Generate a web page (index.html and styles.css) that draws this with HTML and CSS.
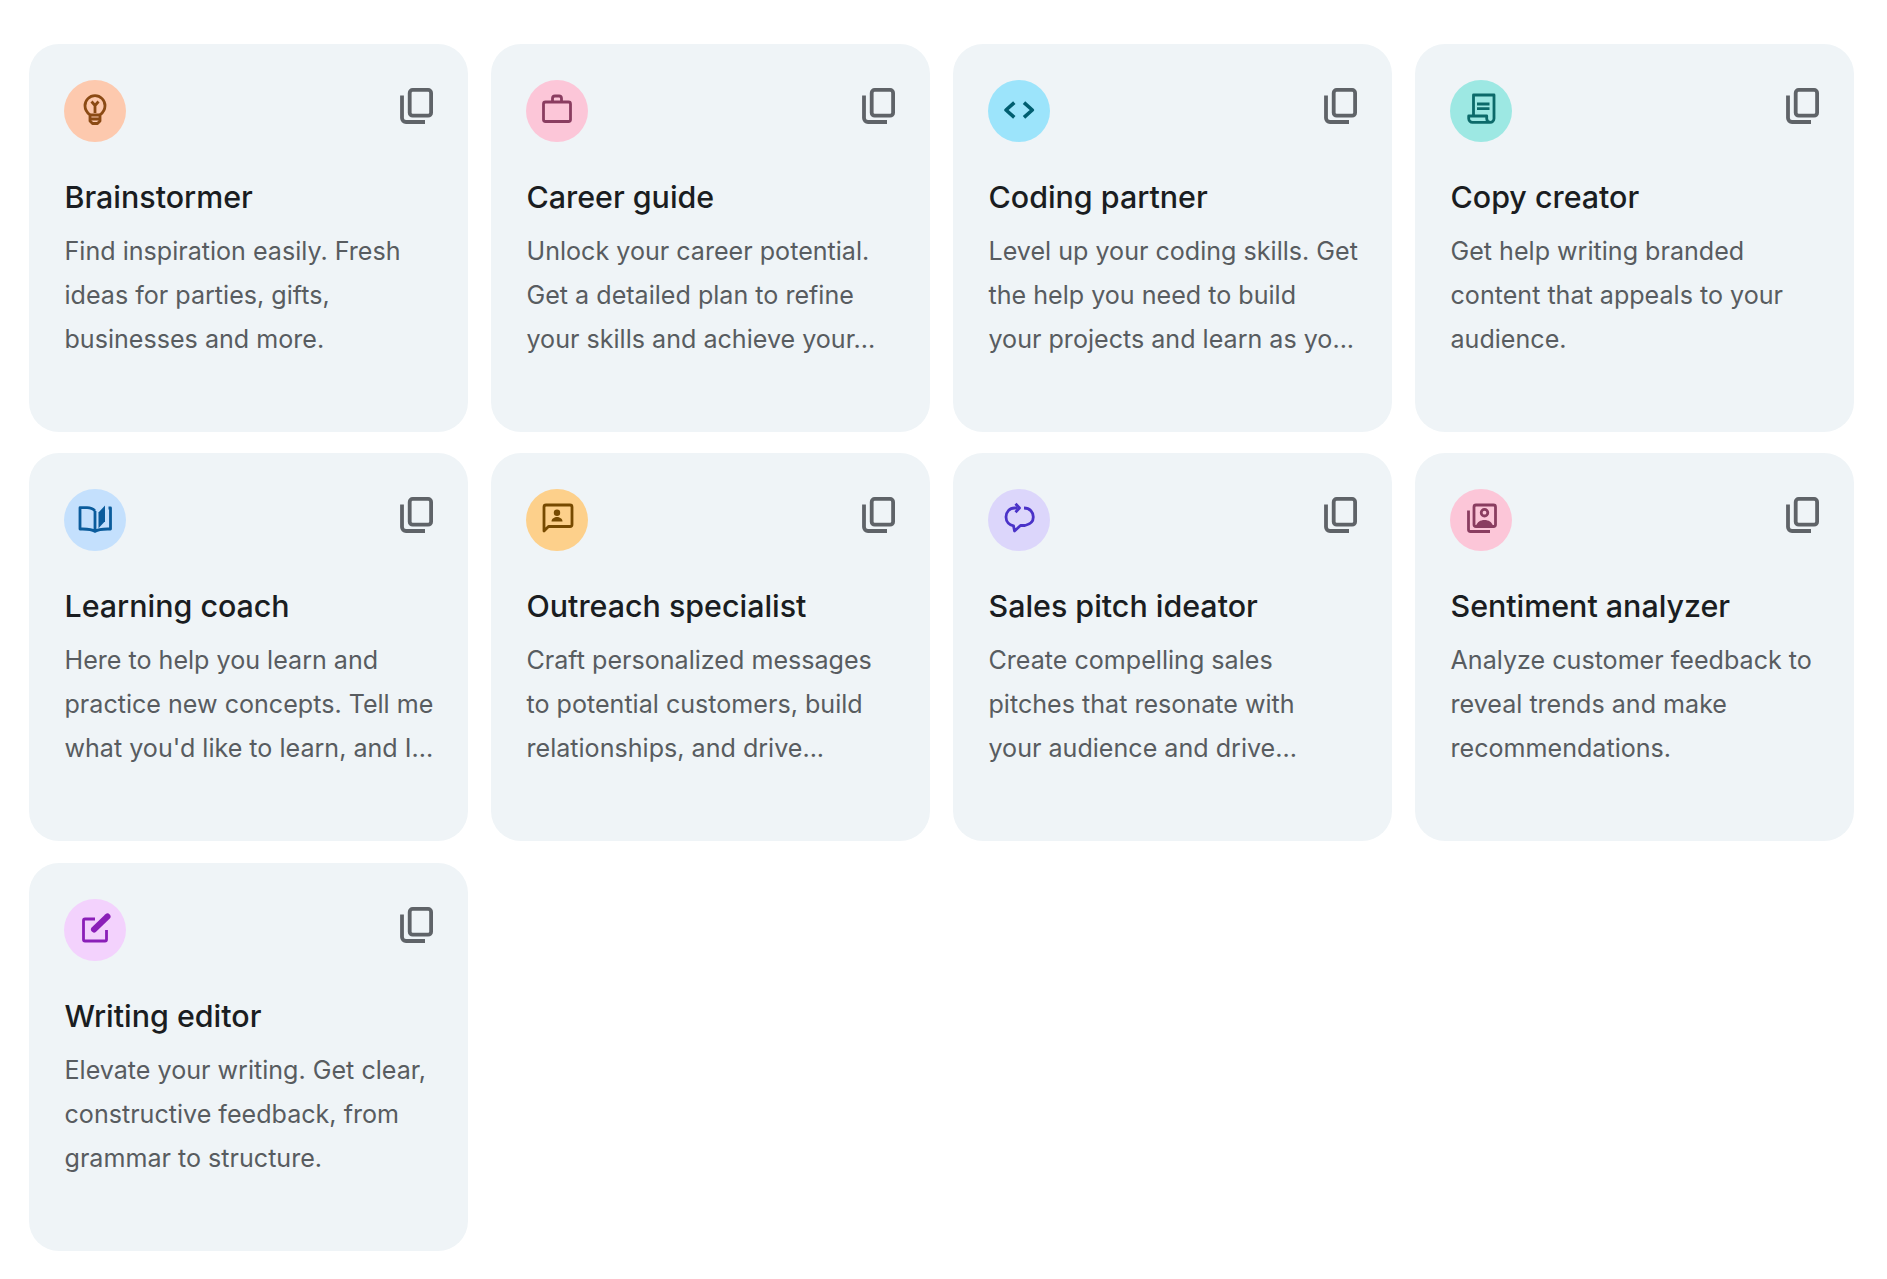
FILE: index.html
```html
<!DOCTYPE html>
<html lang="en">
<head>
<meta charset="utf-8">
<title>Gems</title>
<link rel="stylesheet" href="styles.css">
</head>
<body>
<svg class="defs" aria-hidden="true"><defs>
<symbol id="copy" viewBox="0 0 33 36"><rect x="9.700" y="1.900" width="21.400" height="25.800" rx="3"/><path d="M2 7.500V30a4 4 0 0 0 4 4H25"/></symbol>
</defs></svg>
<main class="grid">
<article class="card">
 <div class="top"><span class="badge orange"><svg viewBox="0 0 62 62"><path d="M26 35c-3-2.500-5-5.500-5-9.300a10 10 0 0 1 20 0c0 3.800-2 6.800-5 9.300v6l-2.500 2.500h-5L26 41z"/><path d="M26 35h10M26 39h10M27.500 21.500l3.500 4 3.500-4M31 25.500V33"/></svg></span><svg class="copy"><use href="#copy"/></svg></div>
 <h2>Brainstormer</h2>
 <p>Find inspiration easily. Fresh<br>ideas for parties, gifts,<br>businesses and more.</p>
</article>
<article class="card">
 <div class="top"><span class="badge rose"><svg viewBox="0 0 62 62"><rect x="17.500" y="22" width="27" height="19.500" rx="2"/><path d="M26.500 22v-3.500a2.500 2.500 0 0 1 2.500-2.500h4a2.500 2.500 0 0 1 2.500 2.500V22"/></svg></span><svg class="copy"><use href="#copy"/></svg></div>
 <h2>Career guide</h2>
 <p>Unlock your career potential.<br>Get a detailed plan to refine<br>your skills and achieve your...</p>
</article>
<article class="card">
 <div class="top"><span class="badge sky"><svg viewBox="0 0 62 62"><path class="bold" d="M26.300 22.700 18 30l8.300 7.300M36 22.700 44.300 30 36 37.300"/></svg></span><svg class="copy"><use href="#copy"/></svg></div>
 <h2>Coding partner</h2>
 <p>Level up your coding skills. Get<br>the help you need to build<br>your projects and learn as yo...</p>
</article>
<article class="card">
 <div class="top"><span class="badge teal"><svg viewBox="0 0 62 62"><path d="M23.500 36V15h20.500v23.500a3.800 3.800 0 0 1-3.800 3.800H22.500a3.800 3.800 0 0 1-3.800-3.800V36h18v2.500a3.800 3.800 0 0 0 3.500 3.800"/><path d="M27 24h12.500M27 28.700h12.500"/></svg></span><svg class="copy"><use href="#copy"/></svg></div>
 <h2>Copy creator</h2>
 <p>Get help writing branded<br>content that appeals to your<br>audience.</p>
</article>
<article class="card">
 <div class="top"><span class="badge blue"><svg viewBox="0 0 62 62"><path d="M31 22c-2-2.300-5-3.300-8-3.300h-7V40c5 0 11-.5 15 2.500 4-3 10-2.500 15.500-2.500V19h-2M31 22v20"/><path class="solid" d="M34.500 23.500 41 16.500v15.700l-6.500 7z"/></svg></span><svg class="copy"><use href="#copy"/></svg></div>
 <h2>Learning coach</h2>
 <p>Here to help you learn and<br>practice new concepts. Tell me<br>what you'd like to learn, and I...</p>
</article>
<article class="card">
 <div class="top"><span class="badge amber"><svg viewBox="0 0 62 62"><path d="M18 42V18a2 2 0 0 1 2-2h24a2 2 0 0 1 2 2v17.500a2 2 0 0 1-2 2H22.500z"/><circle class="solid" cx="31" cy="23.700" r="3.200"/><path class="solid" d="M25.500 32.500c0-3 3-4.500 5.500-4.500s5.500 1.500 5.500 4.500z"/></svg></span><svg class="copy"><use href="#copy"/></svg></div>
 <h2>Outreach specialist</h2>
 <p>Craft personalized messages<br>to potential customers, build<br>relationships, and drive...</p>
</article>
<article class="card">
 <div class="top"><span class="badge violet"><svg viewBox="0 0 62 62"><path d="M29.500 19h-3C21.500 19 18 23 18 28s3.500 8 7.500 8.800L26.500 42l6-5.500h4.500c4.500-1 8.300-4 8.300-8.500S42 19 36 19"/><path d="M27.500 14.700 31.500 19l-4 4.300"/></svg></span><svg class="copy"><use href="#copy"/></svg></div>
 <h2>Sales pitch ideator</h2>
 <p>Create compelling sales<br>pitches that resonate with<br>your audience and drive...</p>
</article>
<article class="card">
 <div class="top"><span class="badge pink"><svg viewBox="0 0 62 62"><rect x="24" y="16" width="21.500" height="21.500" rx="2"/><path d="M18.500 21.500V40.500a2 2 0 0 0 2 2H40"/><circle cx="34.500" cy="23.700" r="3.300"/><path class="solid" d="M26 37c1-4 4.500-6 8.500-6s7.500 2 8.500 6z"/></svg></span><svg class="copy"><use href="#copy"/></svg></div>
 <h2>Sentiment analyzer</h2>
 <p>Analyze customer feedback to<br>reveal trends and make<br>recommendations.</p>
</article>
<article class="card">
 <div class="top"><span class="badge lilac"><svg viewBox="0 0 62 62"><path d="M31 20H21a1.500 1.500 0 0 0-1.500 1.500v19a1.500 1.500 0 0 0 1.500 1.500h20a1.500 1.500 0 0 0 1.500-1.500V31"/><path class="pen" d="M30 30.500 43.500 17.500"/></svg></span><svg class="copy"><use href="#copy"/></svg></div>
 <h2>Writing editor</h2>
 <p>Elevate your writing. Get clear,<br>constructive feedback, from<br>grammar to structure.</p>
</article>
</main>
</body>
</html>
```
FILE: styles.css
```css
* { box-sizing: border-box; }
html, body { margin: 0; background: #fff; }
body { padding: 44px 0 0 29px; font-family: "Inter", "Noto Sans", sans-serif; }
.defs { display: none; }
.grid { display: grid; grid-template-columns: repeat(4, 439px); grid-auto-rows: 388px; column-gap: 23px; row-gap: 21.250px; }
.card { background: #eff4f7; border-radius: 30px; padding: 36px 35px; }
.top { display: flex; justify-content: space-between; align-items: flex-start; height: 62px; }
.badge { width: 62px; height: 62px; border-radius: 50%; flex: none; }
.badge svg { display: block; width: 62px; height: 62px; fill: none; stroke: currentColor; stroke-width: 2.800; stroke-linejoin: round; }
.badge svg .solid { fill: currentColor; stroke: none; }
.badge svg .bold { stroke-width: 3.600; }
.badge svg .pen { stroke-width: 6; stroke-linecap: round; }
.copy { width: 33px; height: 36px; margin: 8px 0 0; fill: none; stroke: #5f6368; stroke-width: 3.800; flex: none; }
.orange { background: #fdc9ae; color: #8b4a14; }
.rose { background: #fcc6d8; color: #8a3d60; }
.sky { background: #9ce4fb; color: #005e70; }
.teal { background: #9de8e3; color: #0c6a6a; }
.blue { background: #c4e0fd; color: #0b5c9c; }
.amber { background: #fdd08b; color: #774a00; }
.violet { background: #dcd6fb; color: #4a32c8; }
.pink { background: #fcc6d8; color: #8a3d60; }
.lilac { background: #f3d2fd; color: #8a1fb8; }
h2 { margin: 35px 0 0; padding-left: 0.500px; font-size: 30.400px; line-height: 40px; font-weight: 500; color: #1a1d21; white-space: nowrap; }
p { margin: 12px 0 0; padding-left: 0.500px; font-size: 25.100px; line-height: 44px; font-weight: 400; color: #585c60; white-space: nowrap; }
```
